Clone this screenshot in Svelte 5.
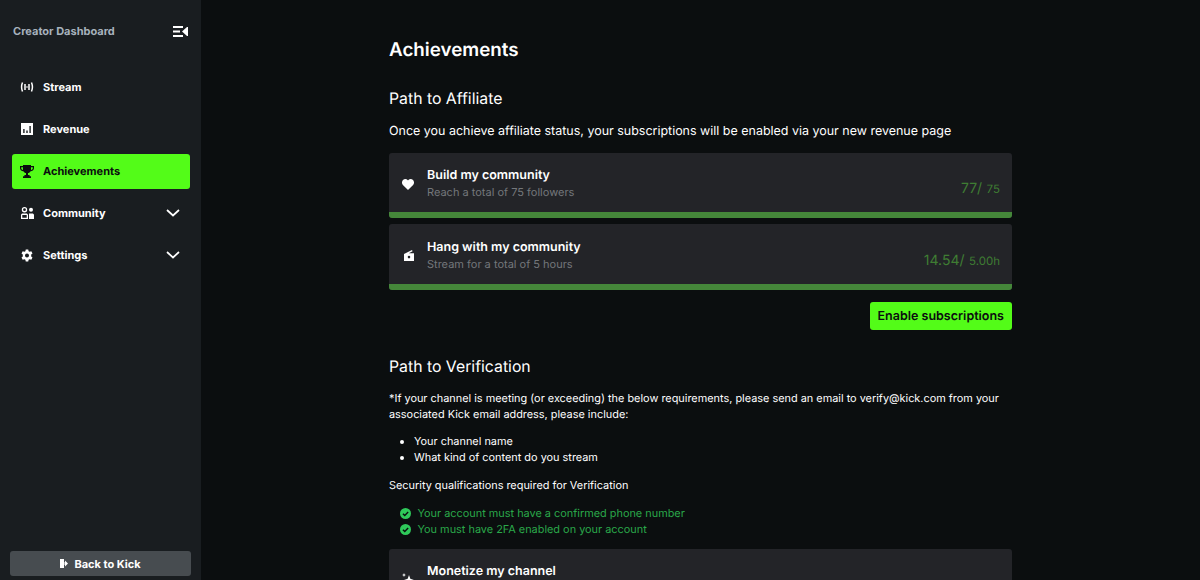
<script>
  const nav = [
    { label: "Stream", icon: "stream" },
    { label: "Revenue", icon: "revenue" },
    { label: "Achievements", icon: "trophy", active: true },
    { label: "Community", icon: "community", more: true },
    { label: "Settings", icon: "gear", more: true }
  ];
</script>

<div class="page">
  <aside class="sidebar">
    <div class="side-head">
      <span class="side-title">Creator Dashboard</span>
      <svg class="collapse" width="15" height="11" viewBox="0 0 15 11" fill="#fff">
        <rect x="0" y="0" width="10" height="2" />
        <rect x="0" y="4.500" width="7" height="2" />
        <rect x="0" y="9" width="10" height="2" />
        <path d="M9 5.500 14 1h1v9h-1z" />
      </svg>
    </div>
    <nav class="nav">
      {#each nav as item}
        <div class="nav-item" class:active={item.active}>
          <span class="nav-icon">
            {#if item.icon === "stream"}
              <svg width="14" height="10" viewBox="0 0 16 12" fill="none" stroke="currentColor" stroke-width="1.800">
                <path d="M2.600 .5Q.4 6 2.600 11.500M13.400 .5Q15.600 6 13.400 11.500" />
                <path d="M5.600 2.500v7M10.400 2.500v7" />
                <circle cx="8" cy="6" r="1" fill="currentColor" stroke="none" />
              </svg>
            {:else if item.icon === "revenue"}
              <svg width="12" height="12" viewBox="0 0 12 12">
                <path fill="currentColor" fill-rule="evenodd" d="M0 0h12v12H0zM2.200 6v4h1.400V6zM5.300 7.600V10h1.400V7.600zM8.400 3v7h1.400V3z" />
              </svg>
            {:else if item.icon === "trophy"}
              <svg width="14" height="13" viewBox="0 0 14 13" fill="currentColor">
                <path d="M3 0h8v1h3v2.200c0 1.600-1.300 2.800-3.400 3C10 7.200 9 7.900 8 8.100V10h1.600v1.200H11V13H3v-1.800h1.400V10H6V8.100C5 7.900 4 7.200 3.400 6.200 1.300 6 0 4.800 0 3.200V1h3zM1.200 2.200v1c0 .8.600 1.500 1.800 1.700V2.200zM12.800 2.200H11v2.700c1.200-.2 1.800-.9 1.800-1.700z" fill-rule="evenodd" />
              </svg>
            {:else if item.icon === "community"}
              <svg width="13" height="12" viewBox="0 0 13 12" fill="currentColor">
                <path fill-rule="evenodd" d="M3.500 0a2.700 2.700 0 1 1 0 5.400 2.700 2.700 0 0 1 0-5.400zm0 1.300a1.400 1.400 0 1 0 0 2.800 1.400 1.400 0 0 0 0-2.800z" />
                <path fill-rule="evenodd" d="M0 8c0-1 .8-1.600 1.800-1.600h3.400c1 0 1.800.6 1.800 1.600v4H0zm1.300.1v2.600h4.400V8.100z" />
                <circle cx="10" cy="2.800" r="2" />
                <path d="M8 6.400h3.200c1 0 1.800.7 1.800 1.700V12H8z" />
              </svg>
            {:else}
              <svg width="12" height="13" viewBox="0 0 24 24" fill="currentColor">
                <path fill-rule="evenodd" d="M9.500 0h5l.7 3.400 2.100 1.200L20.600 3.500 23 7.800l-2.600 2.300v3.800L23 16.200l-2.400 4.300-3.300-1.100-2.100 1.200-.7 3.400h-5l-.7-3.400-2.100-1.200L3.400 20.500 1 16.200l2.600-2.300v-3.800L1 7.800l2.400-4.300 3.300 1.100 2.100-1.200zM12 8a4 4 0 1 0 0 8 4 4 0 0 0 0-8z" />
              </svg>
            {/if}
          </span>
          <span class="nav-label">{item.label}</span>
          {#if item.more}
            <svg class="chevron" width="14" height="8" viewBox="0 0 14 8" fill="none" stroke="currentColor" stroke-width="1.700">
              <path d="M1 1l6 5.500L13 1" />
            </svg>
          {/if}
        </div>
      {/each}
    </nav>
    <button class="back">
      <svg width="8" height="9" viewBox="0 0 8 9" fill="currentColor">
        <rect x="0" y="0" width="4" height="9" />
        <path d="M5 3V1.500L8 4.500 5 7.500V6H4.500V3z" />
      </svg>
      Back to Kick
    </button>
  </aside>

  <main class="main">
    <div class="content">
      <h1>Achievements</h1>
      <h2>Path to Affiliate</h2>
      <p class="lead">Once you achieve affiliate status, your subscriptions will be enabled via your new revenue page</p>

      <div class="cards">
        <div class="card">
          <div class="card-body">
            <span class="card-icon">
              <svg width="12" height="11" viewBox="0 0 12 11" fill="#fff">
                <path d="M6 11 .9 6C-.4 4.600-.3 2.400 1 1.100 2.300-.2 4.400-.2 5.600 1L6 1.400l.4-.4c1.200-1.200 3.300-1.200 4.600.1 1.300 1.300 1.400 3.500.1 4.900z" />
              </svg>
            </span>
            <div class="card-text">
              <div class="card-title">Build my community</div>
              <div class="card-sub">Reach a total of 75 followers</div>
            </div>
            <div class="count"><span class="count-big">77/</span> <span class="count-small">75</span></div>
          </div>
          <div class="bar"></div>
        </div>
        <div class="card">
          <div class="card-body">
            <span class="card-icon">
              <svg width="10" height="11" viewBox="0 0 10 11" fill="#fff">
                <path fill-rule="evenodd" d="M0 4 8 0l.6 1.200L4.800 3.200H10V11H0zM5 5.800a1.300 1.300 0 1 0 0 2.600 1.300 1.300 0 0 0 0-2.600z" />
              </svg>
            </span>
            <div class="card-text">
              <div class="card-title">Hang with my community</div>
              <div class="card-sub">Stream for a total of 5 hours</div>
            </div>
            <div class="count"><span class="count-big">14.54/</span> <span class="count-small">5.00h</span></div>
          </div>
          <div class="bar"></div>
        </div>
      </div>

      <div class="actions">
        <button class="enable">Enable subscriptions</button>
      </div>

      <h2 class="verify">Path to Verification</h2>
      <p class="note">*If your channel is meeting (or exceeding) the below requirements, please send an email to verify@kick.com from your associated Kick email address, please include:</p>
      <ul>
        <li>Your channel name</li>
        <li>What kind of content do you stream</li>
      </ul>
      <p class="security">Security qualifications required for Verification</p>
      <div class="checks">
        <div class="check">
          <svg width="11" height="11" viewBox="0 0 12 12"><circle cx="6" cy="6" r="6" fill="#2fc95a" /><path d="M3.200 6.200 5.200 8.200 8.900 4.300" fill="none" stroke="#0b0e0f" stroke-width="1.500" /></svg>
          Your account must have a confirmed phone number
        </div>
        <div class="check">
          <svg width="11" height="11" viewBox="0 0 12 12"><circle cx="6" cy="6" r="6" fill="#2fc95a" /><path d="M3.200 6.200 5.200 8.200 8.900 4.300" fill="none" stroke="#0b0e0f" stroke-width="1.500" /></svg>
          You must have 2FA enabled on your account
        </div>
      </div>

      <div class="card monetize">
        <div class="card-body">
          <span class="card-icon">
            <svg width="12" height="12" viewBox="0 0 12 12" fill="#fff">
              <path d="M7 3l1.300 3.700L12 8 8.300 9.300 7 13 5.700 9.300 2 8l3.700-1.300zM2 1l.6 1.400L4 3l-1.400.6L2 5l-.6-1.400L0 3l1.400-.6z" />
            </svg>
          </span>
          <div class="card-text">
            <div class="card-title">Monetize my channel</div>
          </div>
        </div>
      </div>
    </div>
  </main>
</div>

<style>
  :global(body) {
    margin: 0;
    background: #0b0e0f;
    font-family: Inter, "Liberation Sans", sans-serif;
    color: #fff;
    text-rendering: geometricPrecision;
  }
  .page {
    display: flex;
    height: 580px;
    overflow: hidden;
  }
  .sidebar {
    width: 201px;
    flex: none;
    box-sizing: border-box;
    background: #191d20;
    padding: 0 11px 4px 12px;
    display: flex;
    flex-direction: column;
  }
  .side-head {
    display: flex;
    align-items: center;
    justify-content: space-between;
    height: 62px;
    padding: 0 2px 0 1px;
  }
  .side-title {
    font-size: 11px;
    font-weight: 700;
    color: #a7b2bd;
  }
  .nav {
    margin-top: 8px;
    display: flex;
    flex-direction: column;
    flex: 1;
    gap: 7px;
  }
  .nav-item {
    display: flex;
    align-items: center;
    box-sizing: border-box;
    height: 35px;
    border-radius: 3px;
    padding: 0 10px 1px 8px;
    font-size: 11px;
    font-weight: 700;
    color: #fff;
  }
  .nav-item.active {
    background: #53fc18;
    color: #0b0e0f;
  }
  .nav-icon {
    width: 14px;
    display: flex;
    justify-content: center;
    margin-right: 9px;
  }
  .nav-label {
    flex: 1;
  }
  .back {
    height: 25px;
    margin-left: -2px;
    margin-right: -1px;
    border: 0;
    border-radius: 3px;
    background: #474c50;
    color: #fff;
    font: 700 11px Inter, sans-serif;
    text-rendering: geometricPrecision;
    display: flex;
    align-items: center;
    justify-content: center;
    gap: 6px;
  }
  .main {
    flex: 1;
    min-width: 0;
  }
  .content {
    width: 623px;
    margin: 0 auto;
    padding-top: 39px;
  }
  h1 {
    margin: 0;
    font-size: 18.800px;
    font-weight: 600;
    line-height: 22px;
  }
  h2 {
    margin: 26.500px 0 0;
    font-size: 15.800px;
    font-weight: 400;
    line-height: 22px;
  }
  .lead {
    margin: 14.500px 0 0;
    font-size: 12.470px;
    line-height: 16px;
  }
  .cards {
    margin-top: 12.800px;
    display: flex;
    flex-direction: column;
    gap: 6px;
  }
  .card {
    background: #232428;
    border-radius: 3px;
    overflow: hidden;
  }
  .card-body {
    box-sizing: border-box;
    height: 59.500px;
    display: flex;
    align-items: center;
    padding: 3px 12px 0 13px;
  }
  .card-icon {
    flex: none;
    width: 12px;
    display: flex;
    justify-content: flex-end;
    margin-right: 13px;
  }
  .card-text {
    flex: 1;
  }
  .card-title {
    font-size: 12.500px;
    font-weight: 600;
    line-height: 16px;
  }
  .card-sub {
    margin-top: 1px;
    font-size: 11px;
    line-height: 15px;
    color: #74777b;
  }
  .count {
    align-self: flex-end;
    margin-bottom: 13px;
    color: #3f7d33;
    line-height: 20px;
  }
  .count-big {
    font-size: 14px;
  }
  .count-small {
    font-size: 11.500px;
  }
  .bar {
    height: 6px;
    background: #45873a;
  }
  .actions {
    margin-top: 12.500px;
    display: flex;
    justify-content: flex-end;
  }
  .enable {
    height: 28px;
    padding: 0 8px;
    border: 0;
    border-radius: 3px;
    background: #53fc18;
    color: #0b0e0f;
    font: 600 12.500px Inter, sans-serif;
    text-rendering: geometricPrecision;
  }
  .verify {
    margin-top: 26px;
  }
  .note {
    margin: 12px 0 0;
    font-size: 10.900px;
    line-height: 16px;
  }
  ul {
    margin: 11px 0 0;
    padding-left: 25px;
    font-size: 10.900px;
    line-height: 16px;
  }
  .security {
    margin: 12px 0 0;
    font-size: 10.900px;
    line-height: 16px;
  }
  .checks {
    margin-top: 12px;
    padding-left: 11px;
  }
  .check {
    display: flex;
    align-items: center;
    gap: 6.500px;
    font-size: 10.900px;
    line-height: 16px;
    color: #2aa84a;
  }
  .monetize {
    margin-top: 12px;
  }
  .monetize .card-text {
    padding-bottom: 17px;
  }
  .monetize .card-icon {
    margin-top: -5px;
  }
</style>
